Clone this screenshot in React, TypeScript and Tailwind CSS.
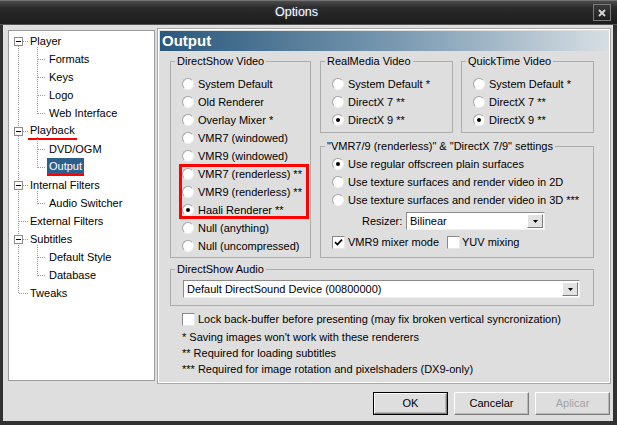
import React from "react";

type Item = { t: string; l: 0 | 1; exp?: boolean; mark?: boolean; sel?: boolean };

const TREE: Item[] = [
  { t: "Player", l: 0, exp: true },
  { t: "Formats", l: 1 },
  { t: "Keys", l: 1 },
  { t: "Logo", l: 1 },
  { t: "Web Interface", l: 1 },
  { t: "Playback", l: 0, exp: true, mark: true },
  { t: "DVD/OGM", l: 1 },
  { t: "Output", l: 1, sel: true },
  { t: "Internal Filters", l: 0, exp: true },
  { t: "Audio Switcher", l: 1 },
  { t: "External Filters", l: 0 },
  { t: "Subtitles", l: 0, exp: true },
  { t: "Default Style", l: 1 },
  { t: "Database", l: 1 },
  { t: "Tweaks", l: 0 },
];

const GROUPS: [number, number][] = [
  [0, 4],
  [5, 7],
  [8, 9],
  [11, 13],
];

function TreeLines() {
  const c = (i: number) => 10.5 + 18 * i;
  const dot = { stroke: "#9a9a9a", strokeDasharray: "1 1", strokeWidth: 1 };
  const els: React.ReactElement[] = [];
  els.push(<line key="v0" x1={9.5} y1={c(0)} x2={9.5} y2={c(14)} {...dot} />);
  GROUPS.forEach(([p, last], k) => {
    els.push(<line key={"g" + k} x1={28.5} y1={c(p) + 5} x2={28.5} y2={c(last)} {...dot} />);
  });
  TREE.forEach((it, i) => {
    if (it.l === 0) els.push(<line key={"h" + i} x1={10} y1={c(i)} x2={19} y2={c(i)} {...dot} />);
    else els.push(<line key={"h" + i} x1={29} y1={c(i)} x2={37} y2={c(i)} {...dot} />);
  });
  TREE.forEach((it, i) => {
    if (it.exp) {
      els.push(
        <g key={"e" + i}>
          <rect x={5.5} y={c(i) - 4} width={8} height={8} fill="#fff" stroke="#8c8c8c" />
          <line x1={7} y1={c(i)} x2={12} y2={c(i)} stroke="#000" strokeWidth={1} />
        </g>
      );
    }
  });
  return (
    <svg className="pointer-events-none absolute left-0 top-0" width="145" height="300" shapeRendering="crispEdges">
      {els}
    </svg>
  );
}

function Tree() {
  return (
    <div className="relative ml-[5px] mt-[2px] h-[351px] w-[147px] border border-[#9c9c9c] bg-white pt-[1px]">
      <TreeLines />
      {TREE.map((it) => (
        <div key={it.t} className={`flex h-[18px] items-center ${it.l === 0 ? "pl-[19px]" : "pl-[38px]"}`}>
          <span
            className={`whitespace-nowrap px-[2px] leading-[16px] ${
              it.sel
                ? "border-b-2 border-[#f00] bg-[#2d5f8c] text-white"
                : it.mark
                ? "border-b-2 border-[#f00] text-black"
                : "text-black"
            }`}
          >
            {it.t}
          </span>
        </div>
      ))}
    </div>
  );
}

function Radio({ checked }: { checked?: boolean }) {
  return (
    <span className="flex h-[12px] w-[12px] shrink-0 items-center justify-center rounded-full border border-b-[#f2f2f2] border-l-[#a4a4a4] border-r-[#f2f2f2] border-t-[#a4a4a4] bg-white">
      {checked && <span className="h-[4px] w-[4px] rounded-full bg-black" />}
    </span>
  );
}

function RadioRow({ text, checked }: { text: string; checked?: boolean }) {
  return (
    <div className="flex h-[18px] items-center gap-[4px] whitespace-nowrap">
      <Radio checked={checked} />
      <span>{text}</span>
    </div>
  );
}

function Check({ checked }: { checked?: boolean }) {
  return (
    <span className="flex h-[13px] w-[13px] shrink-0 items-center justify-center border border-b-[#e8e8e8] border-l-[#8a8a8a] border-r-[#e8e8e8] border-t-[#8a8a8a] bg-white">
      {checked && (
        <svg width="9" height="9" viewBox="0 0 9 9">
          <path d="M1 4.2 L3.4 6.6 L8 1.6" stroke="#000" strokeWidth="1.7" fill="none" />
        </svg>
      )}
    </span>
  );
}

function Select({ text, className }: { text: string; className: string }) {
  return (
    <div
      className={`flex h-[18px] items-center border border-b-[#f0f0f0] border-l-[#8c8c8c] border-r-[#f0f0f0] border-t-[#8c8c8c] bg-white ${className}`}
    >
      <span className="flex-1 whitespace-nowrap pl-[3px] leading-[16px]">{text}</span>
      <span className="mr-[1px] flex h-[14px] w-[16px] items-center justify-center border border-b-[#7a7a7a] border-l-white border-r-[#7a7a7a] border-t-white bg-[#e2e2e2]">
        <svg width="5" height="3" viewBox="0 0 5 3">
          <path d="M0 0h5L2.5 3z" fill="#000" />
        </svg>
      </span>
    </div>
  );
}

function Group({ label, className, children }: { label: string; className: string; children: React.ReactNode }) {
  return (
    <fieldset className={`border border-[#acacac] ${className}`}>
      <legend className="ml-[4px] whitespace-nowrap px-[2px] leading-[13px]">{label}</legend>
      {children}
    </fieldset>
  );
}

function Btn({ text, def, disabled }: { text: string; def?: boolean; disabled?: boolean }) {
  const inner = (
    <div
      className={`flex h-full w-full items-center justify-center border border-b-[#7c7c7c] border-l-white border-r-[#7c7c7c] border-t-white bg-[#dedede] shadow-[inset_-1px_-1px_0_#b8b8b8] ${
        disabled ? "text-[#a3a3a3]" : "text-black"
      }`}
    >
      {text}
    </div>
  );
  return <div className={`h-[23px] w-[75px] ${def ? "border border-black" : ""}`}>{inner}</div>;
}

function Panel() {
  return (
    <div className="ml-[2px] h-[356px] w-[454px] border border-[#a8a8a8] p-[2px] shadow-[inset_1px_1px_0_#fff,inset_-1px_-1px_0_#fff]">
      <div className="flex h-[20px] items-center bg-[linear-gradient(to_right,#2a587c,#7d9cb3_55%,#d6dee3)] pl-[2px] text-[15px] font-bold text-white">
        Output
      </div>
      <div className="flex flex-col pl-[10px] pr-[14px]">
        <div className="mt-[4px] flex gap-[9px]">
          <Group label="DirectShow Video" className="w-[141px] pb-[2px]">
            <div className="pl-[11px] pt-[7px]">
              <RadioRow text="System Default" />
              <RadioRow text="Old Renderer" />
              <RadioRow text="Overlay Mixer *" />
              <RadioRow text="VMR7 (windowed)" />
              <RadioRow text="VMR9 (windowed)" />
              <div className="relative">
                <RadioRow text="VMR7 (renderless) **" />
                <RadioRow text="VMR9 (renderless) **" />
                <RadioRow text="Haali Renderer **" checked />
                <div className="pointer-events-none absolute left-[-3px] top-[-1px] h-[55px] w-[130px] border-[3px] border-[#f00]" />
              </div>
              <RadioRow text="Null (anything)" />
              <RadioRow text="Null (uncompressed)" />
            </div>
          </Group>
          <div className="flex w-[274px] flex-col">
            <div className="flex gap-[8px]">
              <Group label="RealMedia Video" className="w-[133px] pb-[3px]">
                <div className="pl-[11px] pt-[7px]">
                  <RadioRow text="System Default *" />
                  <RadioRow text="DirectX 7 **" />
                  <RadioRow text="DirectX 9 **" checked />
                </div>
              </Group>
              <Group label="QuickTime Video" className="w-[133px] pb-[3px]">
                <div className="pl-[11px] pt-[7px]">
                  <RadioRow text="System Default *" />
                  <RadioRow text="DirectX 7 **" />
                  <RadioRow text="DirectX 9 **" checked />
                </div>
              </Group>
            </div>
            <Group label={'"VMR7/9 (renderless)" & "DirectX 7/9" settings'} className="mt-[7px] w-[274px] pb-[6px]">
              <div className="pl-[11px] pt-[2px]">
                <RadioRow text="Use regular offscreen plain surfaces" checked />
                <RadioRow text="Use texture surfaces and render video in 2D" />
                <RadioRow text="Use texture surfaces and render video in 3D ***" />
                <div className="mt-[3px] flex h-[18px] items-center">
                  <span className="ml-[30px] w-[44px]">Resizer:</span>
                  <Select text="Bilinear" className="w-[139px]" />
                </div>
                <div className="mt-[3px] flex h-[18px] items-center whitespace-nowrap">
                  <div className="flex w-[115px] items-center gap-[3px]">
                    <Check checked />
                    <span>VMR9 mixer mode</span>
                  </div>
                  <div className="flex items-center gap-[2px]">
                    <Check />
                    <span>YUV mixing</span>
                  </div>
                </div>
              </div>
            </Group>
          </div>
        </div>
        <Group label="DirectShow Audio" className="mt-[5px] w-[424px] pb-[7px]">
          <div className="pl-[12px] pt-[4px]">
            <Select text="Default DirectSound Device (00800000)" className="w-[397px]" />
          </div>
        </Group>
        <div className="mt-[4px] flex h-[18px] items-center gap-[3px] whitespace-nowrap pl-[12px]">
          <Check />
          <span>Lock back-buffer before presenting (may fix broken vertical syncronization)</span>
        </div>
        <div className="mt-[1px] whitespace-nowrap pl-[12px] leading-[16px]">
          <div>* Saving images won't work with these renderers</div>
          <div>** Required for loading subtitles</div>
          <div>*** Required for image rotation and pixelshaders (DX9-only)</div>
        </div>
      </div>
    </div>
  );
}

export default function App() {
  return (
    <div className="flex h-[425px] w-[617px] flex-col overflow-hidden bg-[#323232] font-['Liberation_Sans',Arial,sans-serif] text-[11px] text-black">
      <div className="flex h-[25px] shrink-0 items-center border-b border-t border-b-[#555] border-t-[#747474] bg-[linear-gradient(to_bottom,#4c4c4c,#2a2a2a_30%,#1c1c1c)]">
        <div className="flex-1 text-center text-[12.5px] text-white [text-shadow:0_0_3px_rgba(120,160,255,0.5)]">
          Options
        </div>
        <div className="mr-[6px] flex h-[17px] w-[18px] items-center justify-center border border-[#7a7a7a] bg-[linear-gradient(to_bottom,#3a3a3a,#1e1e1e)]">
          <svg width="8" height="8" viewBox="0 0 8 8">
            <path d="M1 1L7 7M7 1L1 7" stroke="#d8d8d8" strokeWidth="1.8" />
          </svg>
        </div>
      </div>
      <div className="ml-[3px] mr-[4px] flex h-[396px] flex-col bg-[#dedede]">
        <div className="flex pt-[3px]">
          <Tree />
          <Panel />
        </div>
        <div className="mt-[8px] flex justify-end gap-[6px] pr-[3px]">
          <Btn text="OK" def />
          <Btn text="Cancelar" />
          <Btn text="Aplicar" disabled />
        </div>
      </div>
    </div>
  );
}
